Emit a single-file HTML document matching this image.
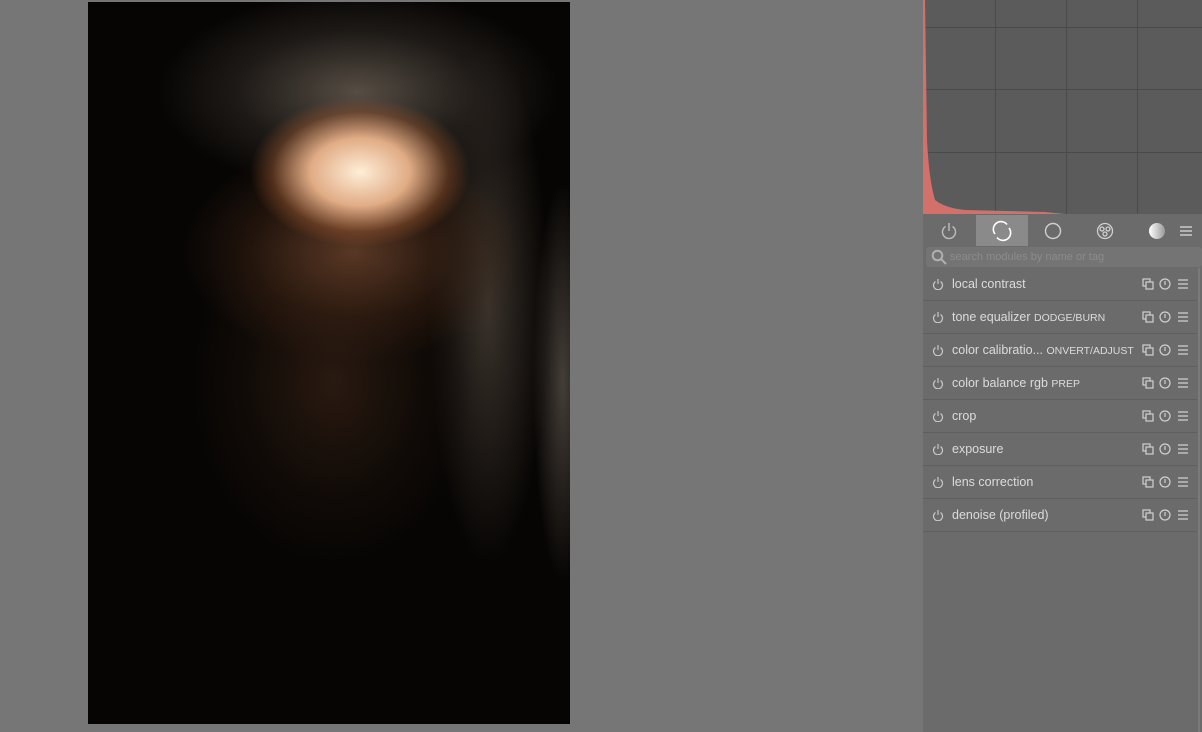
<!DOCTYPE html>
<html><head><style>
body{margin:0;width:1202px;height:732px;background:#767676;position:relative;overflow:hidden;font-family:"Liberation Sans","DejaVu Sans",sans-serif}
#img{position:absolute;left:88px;top:2px;width:482px;height:722px;background:
radial-gradient(ellipse 110px 75px at 272px 170px,rgba(255,238,215,1) 0%,rgba(235,180,140,.95) 45%,rgba(140,80,45,.5) 80%,rgba(0,0,0,0) 100%),
radial-gradient(ellipse 170px 110px at 265px 250px,rgba(120,75,50,.7) 0%,rgba(60,35,20,.5) 60%,rgba(0,0,0,0) 100%),
radial-gradient(ellipse 140px 180px at 245px 380px,rgba(45,28,18,.9) 0%,rgba(22,14,9,.7) 60%,rgba(0,0,0,0) 100%),
radial-gradient(ellipse 200px 100px at 270px 90px,rgba(95,85,75,.9) 0%,rgba(45,40,35,.6) 60%,rgba(0,0,0,0) 100%),
radial-gradient(ellipse 60px 260px at 400px 300px,rgba(80,70,60,.7) 0%,rgba(0,0,0,0) 100%),
radial-gradient(ellipse 30px 200px at 475px 380px,rgba(110,100,90,.6) 0%,rgba(0,0,0,0) 100%),
#070504}
#hist{position:absolute;left:923px;top:0;width:279px;height:214px;background:#5b5b5b;border-left:2px solid #d4706a}
.vl{position:absolute;top:0;height:214px;width:1px;background:#4a4a4a}
.hl{position:absolute;left:0;width:279px;height:1px;background:#4a4a4a}
#panel{position:absolute;left:923px;top:214px;width:279px;height:518px;background:#6b6b6b}
#tabs{position:absolute;left:0;top:1px;width:279px;height:31px}
.tab{position:absolute;top:0;width:52px;height:31px;display:flex;align-items:center;justify-content:center}
#search{position:absolute;left:3px;top:33px;width:276px;height:20px;background:#747474;border-radius:3px;color:#8c8c8c;font-size:11px;line-height:20px}
.row{position:absolute;left:0;width:274px;height:32px;border-bottom:1px solid #5f5f5f;color:#dcdcdc;font-size:12.5px;line-height:32px}
.row .n{position:absolute;left:29px}
.row small{font-size:10.5px}
.row svg{position:absolute;top:10px}
#sb{position:absolute;left:1198px;top:268px;width:2px;height:464px;background:#7a7a7a}
</style></head><body>
<div id="img"></div>
<div id="hist">
<div class="vl" style="left:70px"></div><div class="vl" style="left:141px"></div><div class="vl" style="left:212px"></div>
<div class="hl" style="top:27px"></div><div class="hl" style="top:89px"></div><div class="hl" style="top:152px"></div>
<svg width="279" height="214" style="position:absolute;left:0;top:0"><path d="M0 0 L2 140 Q4 180 10 200 Q20 208 40 210 L120 212 L140 214 L0 214Z" fill="#d4706a"/></svg>
</div>
<div id="panel">
<div id="tabs">
<div class="tab" style="left:0"><svg width="20" height="20" fill="none" stroke="#bdbdbd" stroke-width="1.4"><path d="M6.5 5.5A6.5 6.5 0 1 0 13.5 5.5"/><path d="M10 2v8"/></svg></div>
<div class="tab" style="left:53px;background:#8a8a8a"><svg width="22" height="22" fill="none" stroke="#fff" stroke-width="1.6"><path d="M4 14A7.5 7.5 0 0 1 16 4.5"/><path d="M18 8A7.5 7.5 0 0 1 6 17.5"/></svg></div>
<div class="tab" style="left:104px"><svg width="20" height="20" fill="none" stroke="#d0d0d0" stroke-width="1.4"><circle cx="10" cy="10" r="7.5"/></svg></div>
<div class="tab" style="left:156px"><svg width="20" height="20" fill="none" stroke="#d0d0d0" stroke-width="1.3"><circle cx="10" cy="10" r="7.5"/><circle cx="7" cy="8" r="2"/><circle cx="13" cy="8" r="2"/><circle cx="10" cy="13" r="2"/></svg></div>
<div class="tab" style="left:208px"><svg width="20" height="20"><defs><linearGradient id="g"><stop offset="0" stop-color="#fff"/><stop offset="1" stop-color="#999"/></linearGradient></defs><circle cx="10" cy="10" r="8" fill="url(#g)"/></svg></div>
<div class="tab" style="left:255px;width:24px;justify-content:flex-start"><svg width="14" height="14" stroke="#ddd" stroke-width="1.3"><path d="M2 3h12M2 7h12M2 11h12"/></svg></div>
</div>
<div id="search"><svg width="16" height="16" style="position:absolute;left:5px;top:2px" fill="none" stroke="#b0b0b0" stroke-width="2"><circle cx="6.5" cy="6.5" r="4.8"/><path d="M10 10l5 5"/></svg><span style="position:absolute;left:24px">search modules by name or tag</span></div>
</div>
<div id="rows" style="position:absolute;left:923px;top:268px">
</div>
<div id="sb"></div>
<script>
var names=['local contrast','tone equalizer <small>DODGE/BURN</small>','color calibratio... <small>ONVERT/ADJUST</small>','color balance rgb <small>PREP</small>','crop','exposure','lens correction','denoise (profiled)'];
var h='';
names.forEach(function(n,i){h+='<div class="row" style="top:'+(i*33)+'px"><svg style="left:9px" width="12" height="12" fill="none" stroke="#c8c8c8" stroke-width="1.2"><path d="M3.5 3.5A4.5 4.5 0 1 0 8.5 3.5"/><path d="M6 1v5"/></svg><span class="n">'+n+'</span>'+
'<svg style="left:219px" width="12" height="12" fill="none" stroke="#d0d0d0" stroke-width="1.2"><rect x="1" y="1" width="7" height="7"/><rect x="4" y="4" width="7" height="7" fill="#6b6b6b"/></svg>'+
'<svg style="left:236px" width="12" height="12" fill="none" stroke="#d0d0d0" stroke-width="1.2"><circle cx="6" cy="6" r="5"/><path d="M6 3v4"/></svg>'+
'<svg style="left:254px" width="12" height="12" stroke="#d0d0d0" stroke-width="1.2"><path d="M1 2h10M1 6h10M1 10h10"/></svg></div>';});
document.getElementById('rows').innerHTML=h;
</script>
</body></html>
